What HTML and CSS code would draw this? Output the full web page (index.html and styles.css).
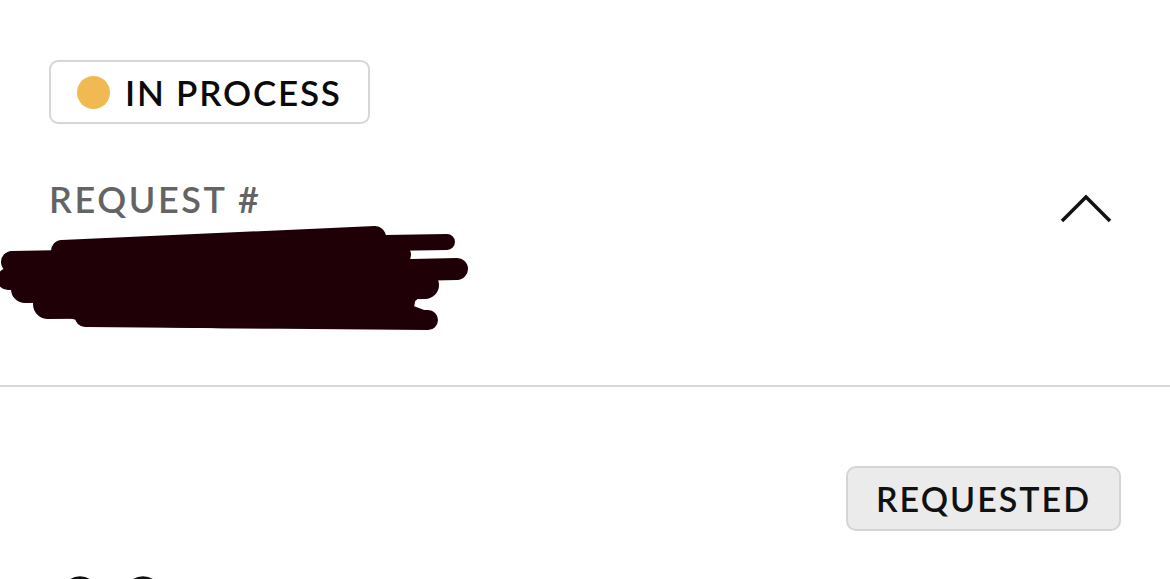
FILE: index.html
```html
<!DOCTYPE html>
<html>
<head>
<meta charset="utf-8">
<link rel="stylesheet" href="styles.css">
</head>
<body>
<div class="page">
  <section class="summary">
    <div class="status-badge"><span class="dot"></span><span class="status-text">IN PROCESS</span></div>
    <div class="request-row">
      <span class="request-label">REQUEST #</span>
      <svg class="chevron" width="52" height="30" viewBox="0 0 52 30"><polyline points="2,28 26,4 50,28" fill="none" stroke="#111" stroke-width="3.5"/></svg>
    </div>
  </section>
  <svg class="scribble" width="470" height="110" viewBox="0 220 470 110">
    <g fill="#1e0006">
      <path d="M55 244 C150 238 300 230 375 229 C400 232 410 240 400 250 C420 262 430 290 410 300 C430 306 440 312 428 318 C330 324 180 326 90 318 C50 310 30 296 40 285 C20 280 5 276 5 268 Z"/>
    </g>
    <g stroke="#1e0006" stroke-linecap="round" fill="none">
      <path d="M62 246 L375 232" stroke-width="22"/>
      <path d="M385 238 L447 237" stroke-width="16"/>
      <path d="M12 257 L400 250" stroke-width="22"/>
      <path d="M8 274 L457 264" stroke-width="22"/>
      <path d="M25 284 L425 280" stroke-width="28"/>
      <path d="M48 299 L400 296" stroke-width="30"/>
      <path d="M85 312 L428 315" stroke-width="20"/>
    </g>
  </svg>
  <div class="divider"></div>
  <section class="detail">
    <div class="pill-row"><span class="pill">REQUESTED</span></div>
    <div class="icons">
      <svg width="200" height="6" viewBox="0 0 200 6"><circle cx="80" cy="22" r="17" fill="none" stroke="#111" stroke-width="3.5"/><circle cx="143" cy="22" r="17" fill="none" stroke="#111" stroke-width="3.5"/></svg>
    </div>
  </section>
</div>
</body>
</html>
```
FILE: styles.css
```css
html, body { margin: 0; padding: 0; background: #fff; }
body { height: 579px; overflow: hidden; font-family: "Lato", "Liberation Sans", sans-serif; }
.page { display: flex; flex-direction: column; }
.summary { padding: 60px 58px 0 49px; display: flex; flex-direction: column; align-items: flex-start; }
.status-badge {
  display: inline-flex; align-items: center; gap: 15px;
  height: 64px; box-sizing: border-box; padding: 0 26px 0 26px;
  border: 2px solid #d6d6d6; border-radius: 9px;
}
.dot { width: 33px; height: 33px; border-radius: 50%; background: #f1b952; }
.status-text { font-size: 35px; font-weight: 600; letter-spacing: 1.8px; color: #0a0a0a; line-height: 1; }
.request-row { align-self: stretch; display: flex; justify-content: space-between; align-items: flex-start; margin-top: 56px; height: 45px; }
.request-label { font-size: 36px; font-weight: 600; letter-spacing: 2.6px; color: #646464; line-height: 38px; }
.chevron { margin-top: 13px; }
.scribble { display: block; }
.divider { height: 2px; background: #d9d9d9; margin-top: 50px; }
.detail { padding: 0 49px; }
.pill-row { display: flex; justify-content: flex-end; margin-top: 79px; }
.pill {
  display: inline-flex; align-items: center; height: 65px; box-sizing: border-box;
  padding: 0 28px; background: #ebebeb; border: 2px solid #d4d4d4; border-radius: 10px;
  font-size: 34px; font-weight: 600; letter-spacing: 2px; color: #111;
}
.icons { margin-top: 42px; margin-left: -49px; }
.icons svg { display: block; }
```
